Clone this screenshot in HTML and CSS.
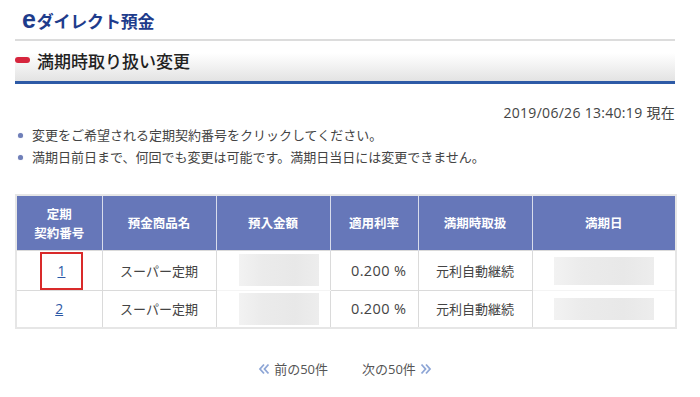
FILE: index.html
```html
<!DOCTYPE html>
<html lang="ja">
<head>
<meta charset="utf-8">
<title>満期時取り扱い変更</title>
<link rel="stylesheet" href="styles.css">
</head>
<body>
<div class="page">
  <div class="brand"><span class="brand-e">e</span>ダイレクト預金</div>
  <h1 class="heading"><span class="marker"></span>満期時取り扱い変更</h1>
  <div class="stamp">2019/06/26 13:40:19 現在</div>
  <ul class="notes">
    <li>変更をご希望される定期契約番号をクリックしてください。</li>
    <li>満期日前日まで、何回でも変更は可能です。満期日当日には変更できません。</li>
  </ul>
  <table class="deposits">
    <colgroup>
      <col class="c1"><col class="c2"><col class="c3"><col class="c4"><col class="c5"><col class="c6">
    </colgroup>
    <thead>
      <tr>
        <th>定期<br>契約番号</th>
        <th>預金商品名</th>
        <th>預入金額</th>
        <th>適用利率</th>
        <th>満期時取扱</th>
        <th>満期日</th>
      </tr>
    </thead>
    <tbody>
      <tr class="r1">
        <td class="num"><a href="#" class="pick selected">1</a></td>
        <td>スーパー定期</td>
        <td class="blur"><span class="mask m-amount"></span></td>
        <td class="rate">0.200 %</td>
        <td>元利自動継続</td>
        <td class="blur"><span class="mask m-date"></span></td>
      </tr>
      <tr class="r2">
        <td class="num"><a href="#" class="pick">2</a></td>
        <td>スーパー定期</td>
        <td class="blur"><span class="mask m-amount"></span></td>
        <td class="rate">0.200 %</td>
        <td>元利自動継続</td>
        <td class="blur"><span class="mask m-date"></span></td>
      </tr>
    </tbody>
  </table>
  <div class="pager">
    <a href="#" class="prev"><svg width="12" height="12" viewBox="0 0 12 12"><path d="M6 1.5L2 6l4 4.5M10.5 1.5L6.5 6l4 4.5" fill="none" stroke="#8ea6d6" stroke-width="1.8"/></svg>前の50件</a>
    <a href="#" class="next">次の50件<svg width="12" height="12" viewBox="0 0 12 12"><path d="M1.5 1.5L5.5 6l-4 4.5M6 1.5L10 6l-4 4.5" fill="none" stroke="#8ea6d6" stroke-width="1.8"/></svg></a>
  </div>
</div>
</body>
</html>
```
FILE: styles.css
```css
* { box-sizing: border-box; }
html, body { margin: 0; padding: 0; background: #fff; }
body {
  font-family: "Open Sans", "Noto Sans CJK JP", sans-serif;
  color: #333;
  font-size: 13px;
}
.page { padding: 0 25px 0 15px; }
.brand {
  height: 41px;
  padding: 5px 0 0 7px;
  font-family: "Noto Sans CJK JP", sans-serif;
  font-size: 17px;
  font-weight: 700;
  color: #1e3c8c;
  line-height: 28px;
  letter-spacing: -0.2px;
  border-bottom: 2px solid #dcdcdc;
}
.brand-e {
  font-family: "Liberation Sans", sans-serif;
  font-size: 25px;
  font-weight: 700;
  margin-right: 1px;
}
.heading {
  margin: 0;
  height: 43px;
  display: flex;
  align-items: center;
  font-family: "Noto Sans CJK JP", sans-serif;
  font-size: 17px;
  font-weight: 500;
  color: #222;
  background: linear-gradient(#ffffff, #ffffff 30%, #e3e3e3);
  border-bottom: 3px solid #2d5aa6;
  padding-bottom: 2px;
}
.marker {
  width: 15px;
  height: 6px;
  border-radius: 3px;
  background: #d6253d;
  margin-right: 7px;
}
.stamp {
  text-align: right;
  margin-top: 18px;
  line-height: 22px;
  font-size: 14px;
  letter-spacing: 0.3px;
  color: #444;
}
.notes {
  list-style: none;
  margin: 0;
  padding: 0;
}
.notes li {
  position: relative;
  padding-left: 17px;
  line-height: 22px;
  font-size: 13px;
  color: #444;
}
.notes li::before {
  content: "";
  position: absolute;
  left: 3px;
  top: 9px;
  width: 5px;
  height: 5px;
  border-radius: 50%;
  background: #6f7fb8;
  box-shadow: 0 0 1px #a9b3d8;
}
.deposits {
  margin-top: 26px;
  width: 660px;
  border-collapse: collapse;
  table-layout: fixed;
  border: 2px solid #e6e6e6;
}
.c1 { width: 86px; }
.c2 { width: 114px; }
.c3 { width: 114px; }
.c4 { width: 88px; }
.c5 { width: 114px; }
.c6 { width: 144px; }
.deposits th {
  background: #6677b9;
  color: #fff;
  font-family: "Noto Sans CJK JP", sans-serif;
  font-size: 12.5px;
  font-weight: 700;
  height: 55px;
  line-height: 19px;
  border-left: 1px solid #d8dcec;
  padding: 0;
}
.deposits th:first-child { border-left: none; }
.deposits td {
  border: 1px solid #dadada;
  text-align: center;
  padding: 0;
  color: #444;
}
.r1 td { height: 40px; }
.r2 td { height: 38px; }
.deposits td.rate { text-align: right; padding-right: 11px; font-size: 14.5px; letter-spacing: 0.4px; }
.deposits td.num { position: relative; }
.pick {
  color: #2b58a6;
  text-decoration: underline;
  font-size: 14px;
}
.pick.selected {
  position: absolute;
  left: 23px;
  top: 1px;
  width: 43px;
  height: 38px;
  border: 2px solid #d92a2a;
  display: flex;
  align-items: center;
  justify-content: center;
}
.deposits td.blur { position: relative; }
.r1 td.blur { border-bottom-color: #f4f4f4; }
.r2 td.blur { border-top-color: #f4f4f4; }
.mask {
  display: block;
  margin: 0 auto;
  background: linear-gradient(90deg, #f2f2f2, #ebebeb 30%, #e8e8e8 70%, #ededed);
}
.m-amount { width: 80px; height: 32px; margin-left: 22px; }
.m-date { width: 100px; height: 22px; }
.r1 .m-date { margin-top: 2px; height: 28px; }
.pager {
  display: flex;
  justify-content: center;
  gap: 34px;
  margin-top: 30px;
  line-height: 20px;
}
.pager a {
  color: #555;
  text-decoration: none;
  font-size: 13px;
  display: flex;
  align-items: center;
  gap: 4px;
}
```
